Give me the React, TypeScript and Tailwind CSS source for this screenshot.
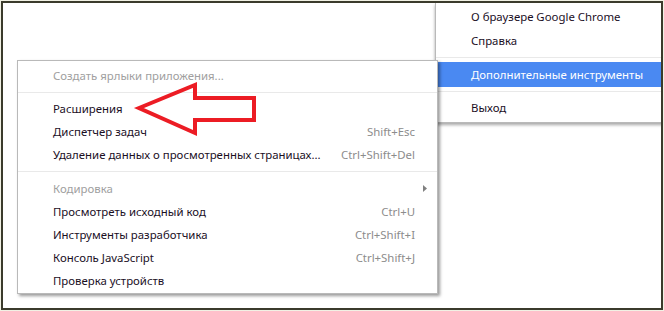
import React from 'react'

type Item = { label: string; shortcut?: string; disabled?: boolean; submenu?: boolean }

const GROUPS: Item[][] = [
  [{ label: 'Создать ярлыки приложения...', disabled: true }],
  [
    { label: 'Расширения' },
    { label: 'Диспетчер задач', shortcut: 'Shift+Esc' },
    { label: 'Удаление данных о просмотренных страницах...', shortcut: 'Ctrl+Shift+Del' },
  ],
  [
    { label: 'Кодировка', disabled: true, submenu: true },
    { label: 'Просмотреть исходный код', shortcut: 'Ctrl+U' },
    { label: 'Инструменты разработчика', shortcut: 'Ctrl+Shift+I' },
    { label: 'Консоль JavaScript', shortcut: 'Ctrl+Shift+J' },
    { label: 'Проверка устройств' },
  ],
]

function Row({ item }: { item: Item }) {
  return (
    <div className="h-[23px] flex items-center pl-[35px] pr-[22px]">
      <span className={`flex-1 ${item.disabled ? 'text-[#a0a0a0]' : 'text-[#1b0f1f]'}`}>{item.label}</span>
      {item.shortcut && <span className="text-[#8c8c8c]">{item.shortcut}</span>}
      {item.submenu && (
        <svg className="w-[4px] h-[7px] -mr-[12px]" viewBox="0 0 4 7">
          <path d="M0 0L4 3.5L0 7Z" fill="#808080" />
        </svg>
      )}
    </div>
  )
}

function Sep({ h }: { h: string }) {
  return (
    <div className={`${h} flex items-center`}>
      <div className="h-px w-full bg-[#e9e9e9]" />
    </div>
  )
}

export default function App() {
  return (
    <div
      className="w-[664px] h-[311px] bg-[#f1f1e4] p-px text-[11.4px] leading-none"
      style={{ fontFamily: '"Noto Sans", "Open Sans", sans-serif' }}
    >
      <div className="relative w-full h-full border-2 border-[#3b3b2c] bg-white overflow-hidden">

        {/* Main menu */}
        <div className="absolute left-[432px] top-0 w-[260px] bg-white border-l border-b border-[#b9b9b9] shadow-[0_2px_3px_rgba(0,0,0,0.35)] pt-[2px] pb-[2px]">
          <div className="h-[24px] flex items-center pl-[35px] text-[#1b0f1f]">О браузере Google Chrome</div>
          <div className="h-[24px] flex items-center pl-[35px] text-[#1b0f1f]">Справка</div>
          <Sep h="h-[9px]" />
          <div className="h-[25px] flex items-center pl-[35px] bg-[#4a89f2] text-white">Дополнительные инструменты</div>
          <Sep h="h-[9px]" />
          <div className="h-[24px] flex items-center pl-[35px] text-[#1b0f1f]">Выход</div>
        </div>

        {/* Submenu */}
        <div className="absolute left-[14px] top-[57px] w-[421px] bg-white border border-[#b9b9b9] shadow-[2px_2px_3px_rgba(0,0,0,0.4)] pt-[3px] pb-px">
          {GROUPS.map((g, gi) => (
            <div key={gi}>
              {gi > 0 && <Sep h={gi === 1 ? 'h-[10px]' : 'h-[11px]'} />}
              {g.map(item => <Row key={item.label} item={item} />)}
            </div>
          ))}
        </div>

        {/* Red arrow */}
        <svg className="absolute -left-[3px] -top-[3px] w-[664px] h-[311px] pointer-events-none" viewBox="0 0 664 311">
          <polygon
            points="139,108 195,85 195,98 254,98 254,120 195,120 195,133"
            fill="none"
            stroke="#ec1c24"
            strokeWidth="4"
            strokeLinejoin="miter"
          />
        </svg>
      </div>
    </div>
  )
}
